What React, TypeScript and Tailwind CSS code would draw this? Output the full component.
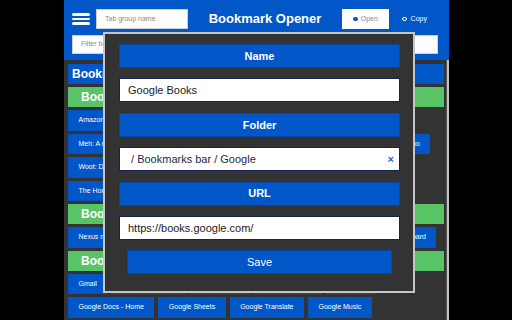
const font = { fontFamily: '"Liberation Sans", Arial, sans-serif' };

function Btn({ label, className = "" }: { label: string; className?: string }) {
  return (
    <div
      className={`h-full shrink-0 bg-[#0157c7] text-white text-[7px] px-[10.5px] flex items-center whitespace-nowrap overflow-hidden ${className}`}
    >
      {label}
    </div>
  );
}

function Row({ items }: { items: { label: string; className?: string }[] }) {
  return (
    <div className="h-[20.5px] shrink-0 flex gap-[4px]">
      {items.map((b) => (
        <Btn key={b.label} label={b.label} className={b.className} />
      ))}
    </div>
  );
}

function Folder({ name }: { name: string }) {
  return (
    <div className="h-[20px] shrink-0 bg-[#59c466] text-white text-[12px] font-bold pl-[13px] flex items-center">
      {name}
    </div>
  );
}

function Field({ value, clear, dark }: { value: string; clear?: boolean; dark?: boolean }) {
  return (
    <div className="h-[24px] shrink-0 bg-white border border-[#17215a] flex items-center pl-[8px] pr-[5px]">
      <span className={`flex-1 text-[11px] whitespace-pre ${dark ? "text-[#1f2a44]" : "text-[#222]"}`}>{value}</span>
      {clear && <span className="text-[#2563d9] text-[11px] font-bold leading-none">×</span>}
    </div>
  );
}

function Label({ text }: { text: string }) {
  return (
    <div className="h-[24px] shrink-0 bg-[#0157c7] border border-[#0a47a3] text-white text-[11px] font-bold flex items-center justify-center">
      {text}
    </div>
  );
}

export default function App() {
  return (
    <div className="h-screen w-full bg-black overflow-hidden relative" style={font}>
      <div className="ml-[64px] w-[385px] h-full flex flex-col">
        {/* header */}
        <div className="shrink-0 bg-[#0157c7] pl-[8px] pr-[11px] pt-[9px] pb-[6px] flex flex-col gap-[6px]">
          <div className="h-[20px] flex items-center">
            <div className="w-[18px] flex flex-col gap-[2px]">
              <div className="h-[2.5px] rounded-full bg-white" />
              <div className="h-[2.5px] rounded-full bg-white" />
              <div className="h-[2.5px] rounded-full bg-white" />
            </div>
            <div className="ml-[6px] w-[92px] h-full bg-white border border-[#d0d0d0] flex items-center pl-[8px] text-[7px] text-[#8a8a8a]">
              Tab group name
            </div>
            <div className="flex-1 text-center text-white text-[13px] font-bold">Bookmark Opener</div>
            <div className="w-[47px] h-full bg-white flex items-center justify-center gap-[3px]">
              <span className="w-[4.5px] h-[4.5px] rounded-full bg-[#0157c7]" />
              <span className="text-[7px] text-[#7b8aa8]">Open</span>
            </div>
            <div className="ml-[2px] w-[47px] h-full flex items-center justify-center gap-[4px]">
              <span className="w-[4.5px] h-[4.5px] rounded-full border border-white" />
              <span className="text-[7px] text-white">Copy</span>
            </div>
          </div>
          <div className="h-[19px] bg-white border border-[#d0d0d0] flex items-center pl-[8px] text-[7px] text-[#8a8a8a]">
            Filter bookmarks
          </div>
        </div>

        {/* content */}
        <div className="flex-1 flex min-h-0">
          <div className="flex-1 bg-[#333333] pl-[4px] pr-[2px] pt-[4px] flex flex-col gap-[3px] overflow-hidden">
            <div className="h-[20px] shrink-0 bg-[#0157c7] text-white text-[12px] font-bold pl-[4px] flex items-center">
              Bookmarks bar
            </div>
            <Folder name="Bookmarks bar / Shopping" />
            <Row items={[{ label: "Amazon.com: Online Shopping for Electronics, Apparel, Computers, Books", className: "w-[300px]" }]} />
            <Row
              items={[
                { label: "Meh: A new deal every day. Sometimes two. Occasionally three.", className: "w-[284px]" },
                { label: "Dealnews Promo" },
              ]}
            />
            <Row items={[{ label: "Woot: Daily Deals for Electronics, Computers, Home & More", className: "w-[270px]" }]} />
            <Row items={[{ label: "The Home Depot", className: "w-[200px]" }]} />
            <Folder name="Bookmarks bar / Games" />
            <Row
              items={[
                { label: "Nexus mods and community", className: "w-[287px]" },
                { label: "Steam Dashboard" },
              ]}
            />
            <Folder name="Bookmarks bar / Google" />
            <Row
              items={[
                { label: "Gmail" },
                { label: "Google Calendar" },
                { label: "Google Drive" },
                { label: "Google Photos" },
                { label: "YouTube" },
              ]}
            />
            <Row
              items={[
                { label: "Google Docs - Home" },
                { label: "Google Sheets" },
                { label: "Google Translate" },
                { label: "Google Music" },
              ]}
            />
          </div>
          <div className="w-[3px] bg-[#c2c2c2] border-l border-[#555]" />
        </div>
      </div>

      {/* edit dialog */}
      <div className="absolute left-[103px] top-[32px] w-[312px] h-[261px] border-2 border-[#c6c6c6] bg-[#333333] pl-[14px] pr-[13px] pt-[10px] flex flex-col gap-[10.4px]">
        <Label text="Name" />
        <Field value="Google Books" />
        <Label text="Folder" />
        <Field value=" / Bookmarks bar / Google" clear dark />
        <Label text="URL" />
        <Field value="https://books.google.com/" />
        <div className="mx-[8px] h-[24px] shrink-0 bg-[#0157c7] border border-[#0a47a3] text-white text-[11px] flex items-center justify-center">
          Save
        </div>
      </div>
    </div>
  );
}
